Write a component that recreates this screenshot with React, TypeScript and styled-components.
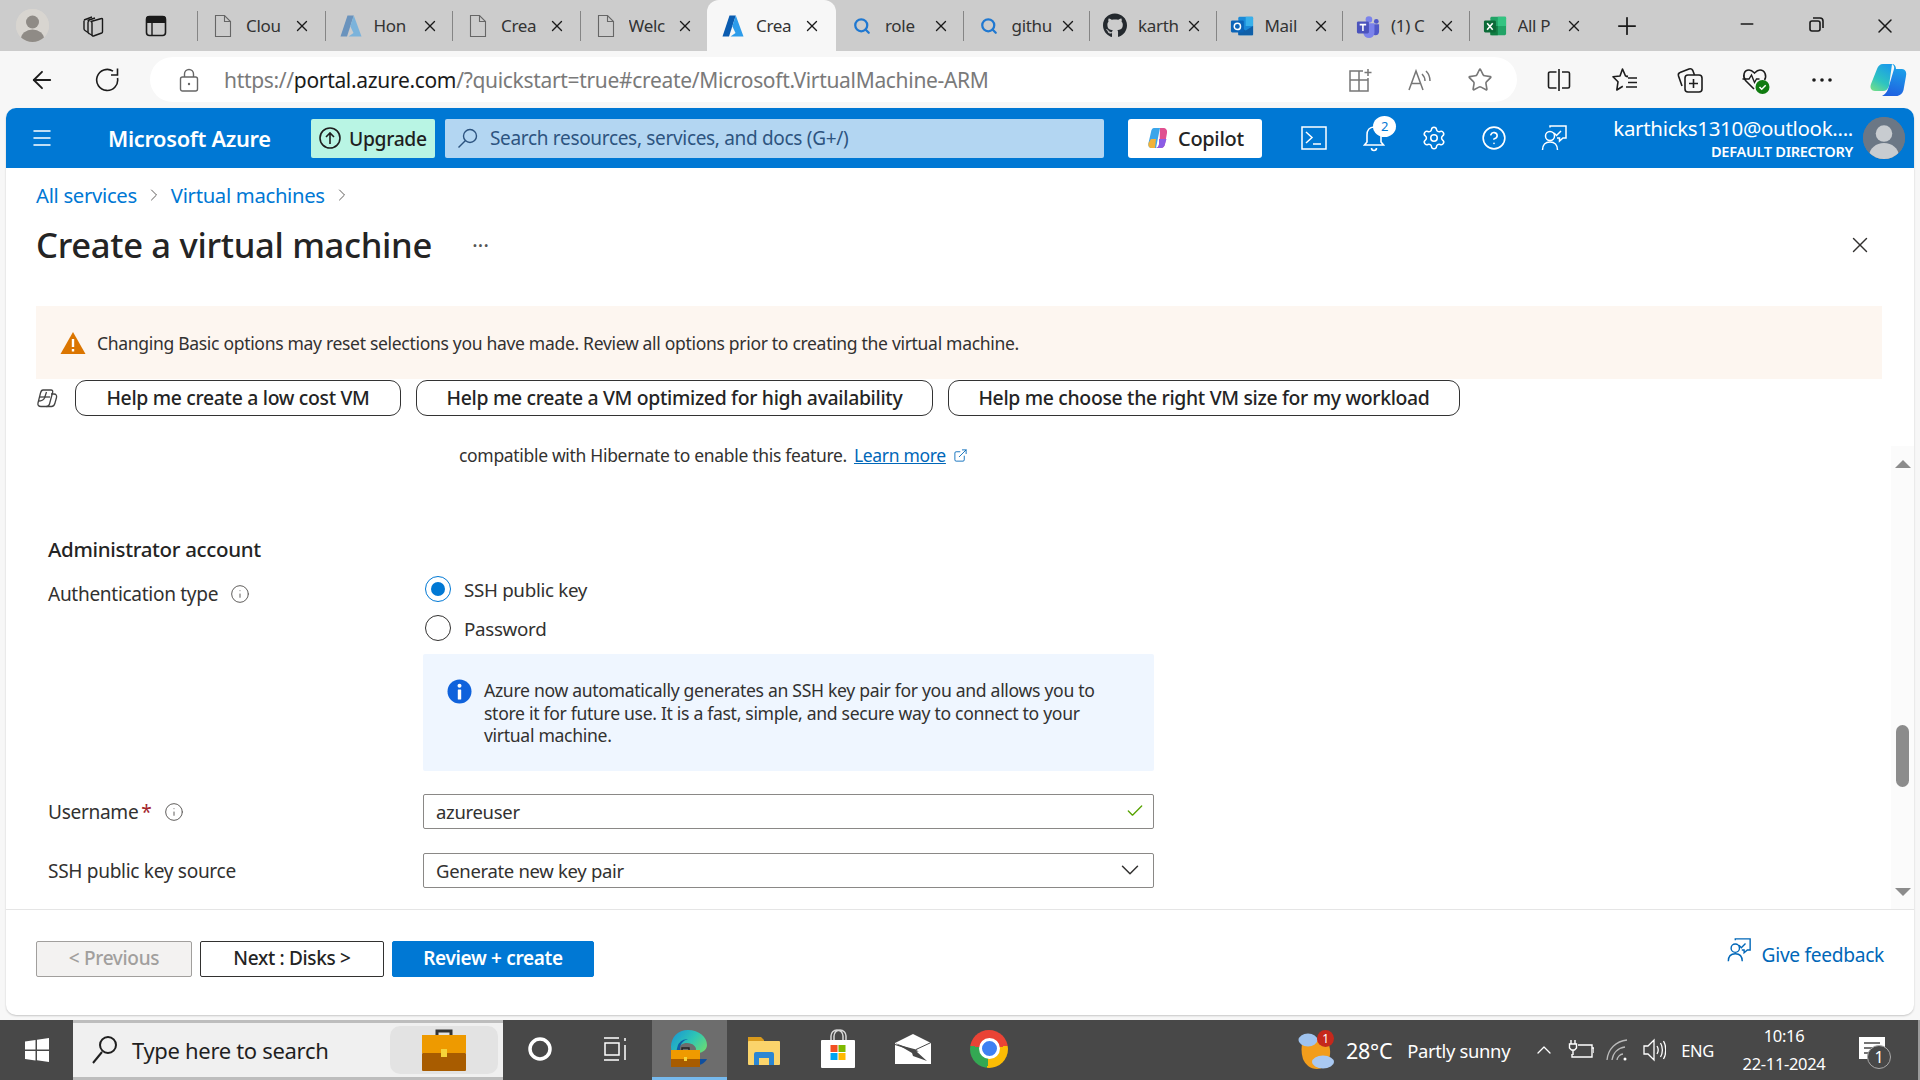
import { ReactElement, ReactNode } from 'react'
import styled, { createGlobalStyle } from 'styled-components'
import { ArrowLeft, Check, ChevronDown, ChevronRight, ChevronUp, CircleHelp, ExternalLink, Info, Menu, Minus, Plus, Search, Settings, Star, X } from 'lucide-react'
import { FaGithub } from 'react-icons/fa'

const FONT = '"Noto Sans", "Open Sans", sans-serif'

const GlobalStyle = createGlobalStyle`
  html, body { margin: 0; padding: 0; background: #f7f7f7; }
  * { box-sizing: border-box; }
  body { font-family: ${FONT}; color: #323130; letter-spacing: -0.02em; }
`

const Page = styled.div`
  width: 1920px;
  height: 1080px;
  overflow: hidden;
  display: flex;
  flex-direction: column;
`

/* browser chrome */
const TabStrip = styled.div`
  height: 51px;
  background: #cccccc;
  display: flex;
  align-items: center;
  flex-shrink: 0;
`
const ProfilePic = styled.div`
  width: 33px;
  height: 33px;
  margin-left: 16px;
  border-radius: 50%;
  background: #d8d5d0;
  overflow: hidden;
  flex-shrink: 0;
  svg { display: block; }
`
const StripIcon = styled.div<{ $ml: number }>`
  width: 24px;
  height: 24px;
  margin-left: ${p => p.$ml}px;
  flex-shrink: 0;
  color: #1a1a1a;
`
const TabList = styled.div`
  display: flex;
  height: 51px;
  margin-left: 29px;
`
const TabItem = styled.div<{ $w: number; $active?: boolean; $sep?: boolean }>`
  position: relative;
  width: ${p => p.$w}px;
  height: 51px;
  display: flex;
  align-items: center;
  padding-left: 14px;
  background: ${p => (p.$active ? '#f7f7f7' : 'transparent')};
  border-radius: ${p => (p.$active ? '12px 12px 0 0' : '0')};
  &::before {
    content: '';
    display: ${p => (p.$sep ? 'block' : 'none')};
    position: absolute;
    left: 0;
    top: 11px;
    height: 30px;
    width: 1px;
    background: #858585;
  }
`
const TabFavicon = styled.div`
  width: 24px;
  height: 24px;
  display: flex;
  align-items: center;
  justify-content: center;
  flex-shrink: 0;
`
const TabTitle = styled.span`
  margin-left: 11px;
  width: 40px;
  font-size: 17px;
  color: #333;
  white-space: nowrap;
  overflow: hidden;
`
const TabClose = styled.div`
  margin-left: 7px;
  display: flex;
  color: #1a1a1a;
`
const NewTab = styled.div`
  width: 64px;
  display: flex;
  align-items: center;
  justify-content: center;
  color: #1a1a1a;
`
const WindowControls = styled.div`
  margin-left: auto;
  display: flex;
  padding-right: 1px;
`
const WindowButton = styled.div`
  width: 69px;
  display: flex;
  justify-content: center;
  color: #1a1a1a;
`
const AddressRow = styled.div`
  height: 57px;
  flex-shrink: 0;
  background: #f7f7f7;
  display: flex;
  align-items: flex-start;
  padding: 6px 0 0 15px;
`
const NavButton = styled.div<{ $ml?: number }>`
  width: 54px;
  height: 45px;
  margin-left: ${p => p.$ml || 0}px;
  flex-shrink: 0;
  display: flex;
  align-items: center;
  justify-content: center;
  color: #1c1c1c;
`
const AddressPill = styled.div`
  width: 1367px;
  height: 45px;
  margin-left: 15px;
  flex-shrink: 0;
  border-radius: 23px;
  background: #fff;
  display: flex;
  align-items: center;
  padding: 0 7px 0 28px;
`
const LockSlot = styled.div`
  width: 22px;
  display: flex;
  justify-content: center;
  color: #555;
`
const UrlText = styled.div`
  flex: 1;
  margin-left: 24px;
  font-size: 21px;
  color: #7a7a7a;
  white-space: nowrap;
`
const UrlHost = styled.span`
  color: #1b1b1b;
`
const PillAction = styled.div`
  width: 60px;
  display: flex;
  justify-content: center;
  color: #777;
`
const ToolbarSlots = styled.div`
  display: flex;
  margin-left: 9px;
  height: 45px;
  flex-shrink: 0;
`
const ToolbarSlot = styled.div`
  width: 65.8px;
  display: flex;
  align-items: center;
  justify-content: center;
  color: #1c1c1c;
`

/* azure portal */
const PortalShell = styled.div`
  height: 907px;
  flex-shrink: 0;
  margin: 0 6px;
  background: #fff;
  border-radius: 10px;
  box-shadow: 0 1px 2px rgba(0, 0, 0, 0.2);
  overflow: hidden;
  display: flex;
  flex-direction: column;
`
const AzureHeader = styled.div`
  height: 60px;
  flex-shrink: 0;
  background: #0078d4;
  display: flex;
  align-items: center;
  color: #fff;
`
const Hamburger = styled.div`
  margin-left: 24px;
  width: 24px;
  display: flex;
`
const BrandName = styled.div`
  margin-left: 54px;
  width: 163px;
  font-size: 21.8px;
  font-weight: 600;
  white-space: nowrap;
`
const UpgradeButton = styled.div`
  margin-left: 40px;
  width: 124px;
  height: 39px;
  border-radius: 2px;
  background: #b9f5e4;
  color: #1f1f1f;
  font-size: 19.3px;
  font-weight: 500;
  display: flex;
  align-items: center;
  gap: 7px;
  padding-left: 7px;
  white-space: nowrap;
`
const SearchBox = styled.div`
  margin-left: 10px;
  width: 659px;
  height: 39px;
  border-radius: 2px;
  background: #b3d6f2;
  color: #2d5480;
  font-size: 19px;
  display: flex;
  align-items: center;
  gap: 12px;
  padding-left: 12px;
  white-space: nowrap;
`
const CopilotButton = styled.div`
  margin-left: 24px;
  width: 134px;
  height: 39px;
  border-radius: 3px;
  background: #fff;
  color: #242424;
  font-size: 20px;
  font-weight: 500;
  display: flex;
  align-items: center;
  gap: 8px;
  padding-left: 18px;
`
const HeaderIcons = styled.div`
  margin-left: 22px;
  display: flex;
`
const HeaderIcon = styled.div`
  position: relative;
  width: 60px;
  height: 40px;
  display: flex;
  align-items: center;
  justify-content: center;
`
const NotifyBadge = styled.span`
  position: absolute;
  top: -2px;
  left: 29px;
  width: 23px;
  height: 21px;
  border-radius: 50%;
  background: #fff;
  color: #0078d4;
  font-size: 13px;
  text-align: center;
  line-height: 21px;
`
const Account = styled.div`
  flex: 1;
  text-align: right;
  white-space: nowrap;
`
const AccountMail = styled.div`
  font-size: 20.5px;
  line-height: 26px;
`
const AccountDir = styled.div`
  font-size: 14.6px;
  font-weight: 600;
  line-height: 20px;
`
const AccountAvatar = styled.div`
  width: 42px;
  height: 42px;
  margin: 0 9px 0 10px;
  border-radius: 50%;
  background: #6b7785;
  overflow: hidden;
  flex-shrink: 0;
  svg { display: block; }
`
const Blade = styled.div`
  flex: 1;
  display: flex;
  flex-direction: column;
  min-height: 0;
`
const Breadcrumb = styled.div`
  height: 24px;
  margin: 15px 0 0 30px;
  display: flex;
  align-items: center;
  gap: 7px;
  font-size: 20.3px;
  color: #0078d4;
  svg { color: #605e5c; }
`
const TitleRow = styled.div`
  height: 36px;
  margin: 19px 0 0 30px;
  display: flex;
  align-items: center;
`
const BladeTitle = styled.h1`
  margin: 0;
  width: 434px;
  font-size: 34.6px;
  font-weight: 500;
  color: #242424;
  white-space: nowrap;
`
const TitleMore = styled.div`
  font-size: 22px;
  color: #555;
  margin-left: 2px;
`
const CloseBlade = styled.div`
  margin-left: auto;
  margin-right: 41px;
  margin-top: 1px;
  display: flex;
  color: #323130;
`
const WarningBar = styled.div`
  height: 73px;
  margin: 44px 32px 0 30px;
  padding-left: 24px;
  background: #fdf6f0;
  display: flex;
  align-items: center;
  gap: 11px;
  font-size: 17.55px;
  color: #323130;
`
const PromptRow = styled.div`
  height: 36px;
  margin: 1px 0 30px 30px;
  display: flex;
  align-items: center;
`
const PromptIcon = styled.div`
  width: 39px;
  color: #444;
  display: flex;
`
const PromptButton = styled.div<{ $w: number; $ml?: number }>`
  width: ${p => p.$w}px;
  margin-left: ${p => p.$ml || 0}px;
  height: 36px;
  padding-bottom: 1px;
  border: 1.5px solid #333;
  border-radius: 11px;
  background: #fff;
  color: #242424;
  font-size: 19.4px;
  font-weight: 500;
  display: flex;
  align-items: center;
  justify-content: center;
  white-space: nowrap;
`
const ScrollArea = styled.div`
  height: 464px;
  flex-shrink: 0;
  border-bottom: 1px solid #e5e5e5;
  display: flex;
`
const FormColumn = styled.div`
  flex: 1;
  padding-left: 42px;
`
const CompatLine = styled.div`
  height: 18px;
  padding-left: 411px;
  display: flex;
  align-items: center;
  gap: 7px;
  font-size: 17.5px;
  white-space: nowrap;
`
const LearnMore = styled.a`
  color: #0067b8;
  text-decoration: underline;
`
const SectionHeading = styled.div`
  height: 24px;
  margin: 73px 0 15px;
  line-height: 24px;
  font-size: 20.5px;
  font-weight: 500;
  color: #242424;
`
const FormRow = styled.div<{ $mb?: number }>`
  display: grid;
  grid-template-columns: 375px 731px;
  margin-bottom: ${p => p.$mb || 0}px;
`
const FieldLabel = styled.div`
  padding-top: 6px;
  height: 30px;
  line-height: 24px;
  font-size: 19.1px;
  display: flex;
  align-items: center;
  gap: 12px;
  color: #323130;
  svg { color: #605e5c; flex-shrink: 0; }
`
const Required = styled.span`
  color: #a4262c;
  margin-left: -9px;
`
const RadioRow = styled.div`
  height: 26px;
  margin-bottom: 13px;
  display: flex;
  align-items: center;
  gap: 13px;
  font-size: 18.8px;
`
const RadioDot = styled.span<{ $checked?: boolean }>`
  width: 26px;
  height: 26px;
  margin-left: 2px;
  border-radius: 50%;
  border: 1.5px solid ${p => (p.$checked ? '#0078d4' : '#323130')};
  display: flex;
  align-items: center;
  justify-content: center;
  &::after {
    content: '';
    display: ${p => (p.$checked ? 'block' : 'none')};
    width: 14px;
    height: 14px;
    border-radius: 50%;
    background: #0078d4;
  }
`
const RadioLabel = styled.span`
  padding-top: 1px;
`
const InfoBox = styled.div`
  height: 117px;
  margin-bottom: 23px;
  padding: 25px 20px 0 24px;
  border-radius: 2px;
  background: #eff6ff;
  display: flex;
  gap: 12px;
`
const InfoText = styled.div`
  font-size: 17.6px;
  line-height: 22.7px;
  max-width: 632px;
  color: #323130;
`
const FieldBox = styled.div`
  height: 35px;
  border: 1px solid #8a8886;
  border-radius: 2px;
  padding: 0 8px 1px 12px;
  display: flex;
  align-items: center;
  justify-content: space-between;
  font-size: 18.5px;
  color: #323130;
`
const ScrollTrack = styled.div`
  width: 23px;
  background: #fbfbfb;
  display: flex;
  flex-direction: column;
  align-items: center;
  padding-top: 14px;
`
const ScrollArrow = styled.div<{ $down?: boolean }>`
  width: 0;
  height: 0;
  border-left: 8px solid transparent;
  border-right: 8px solid transparent;
  border-${p => (p.$down ? 'top' : 'bottom')}: 8px solid #8c8c8c;
`
const ScrollThumb = styled.div`
  width: 13px;
  height: 62px;
  margin: 257px 0 101px;
  border-radius: 7px;
  background: #8c8c8c;
`
const BladeFooter = styled.div`
  flex: 1;
  padding: 31px 30px 0;
  display: flex;
  align-items: flex-start;
  gap: 8px;
`
const FooterButton = styled.div<{ $w: number; $kind: 'disabled' | 'outline' | 'primary' }>`
  width: ${p => p.$w}px;
  height: 36px;
  padding-bottom: 2px;
  border-radius: 2px;
  font-size: 19px;
  font-weight: ${p => (p.$kind === 'primary' ? 600 : 500)};
  display: flex;
  align-items: center;
  justify-content: center;
  white-space: nowrap;
  background: ${p => (p.$kind === 'disabled' ? '#f3f2f1' : p.$kind === 'primary' ? '#0078d4' : '#fff')};
  color: ${p => (p.$kind === 'disabled' ? '#a19f9d' : p.$kind === 'primary' ? '#fff' : '#242424')};
  border: 1px solid ${p => (p.$kind === 'disabled' ? '#a19f9d' : p.$kind === 'primary' ? '#0078d4' : '#323130')};
`
const GiveFeedback = styled.div`
  margin-left: auto;
  display: flex;
  align-items: center;
  gap: 10px;
  margin-top: -2px;
  height: 30px;
  font-size: 19.2px;
  color: #0067b8;
  white-space: nowrap;
  svg { margin-top: -8px; }
`

/* windows taskbar */
const Taskbar = styled.div`
  margin-top: 5px;
  height: 60px;
  flex-shrink: 0;
  background: #484848;
  border-right: 2px solid #9a9a9a;
  display: flex;
  align-items: center;
  color: #fff;
`
const StartButton = styled.div`
  width: 73px;
  height: 60px;
  display: flex;
  align-items: center;
  justify-content: center;
`
const TaskSearch = styled.div`
  width: 430px;
  height: 60px;
  background: #f0f0f0;
  border-top: 3px solid #bdbdbd;
  border-bottom: 3px solid #bdbdbd;
  display: flex;
  align-items: center;
  padding-left: 18px;
  color: #1f1f1f;
  font-size: 22px;
  white-space: nowrap;
`
const TaskSearchText = styled.span`
  margin-left: 13px;
  width: 258px;
`
const TaskChip = styled.div`
  width: 108px;
  height: 48px;
  border-radius: 10px;
  background: #e3e3e3;
  display: flex;
  align-items: center;
  justify-content: center;
`
const TaskSlot = styled.div<{ $active?: boolean }>`
  position: relative;
  width: 74.5px;
  height: 60px;
  display: flex;
  align-items: center;
  justify-content: center;
  background: ${p => (p.$active ? '#6d6d6d' : 'transparent')};
  border-bottom: 3px solid ${p => (p.$active ? '#76b9ed' : 'transparent')};
`
const Tray = styled.div`
  margin-left: auto;
  display: flex;
  align-items: center;
  height: 60px;
  padding-right: 35px;
`
const TrayGlyph = styled.div<{ $ml: number }>`
  margin-left: ${p => p.$ml}px;
  display: flex;
  color: #fff;
`
const WeatherTemp = styled.span`
  margin-left: 11px;
  font-size: 21.5px;
  white-space: nowrap;
`
const WeatherText = styled.span`
  margin-left: 15px;
  font-size: 18.4px;
  white-space: nowrap;
`
const TrayText = styled.span<{ $ml: number }>`
  margin-left: ${p => p.$ml}px;
  font-size: 16.5px;
`
const Clock = styled.div`
  margin-left: 22px;
  width: 96px;
  text-align: center;
  font-size: 16.5px;
  line-height: 28px;
  white-space: nowrap;
`
const ChromeOrb = styled.div`
  width: 38px;
  height: 38px;
  margin-left: 4px;
  border-radius: 50%;
  background: conic-gradient(from -80deg, #ea4335 0 160deg, #fbbc04 160deg 265deg, #34a853 265deg 360deg);
  display: flex;
  align-items: center;
  justify-content: center;
  &::after {
    content: '';
    width: 15px;
    height: 15px;
    border-radius: 50%;
    background: #3f80f2;
    border: 3px solid #fff;
    box-sizing: content-box;
  }
`
const WeatherBadge = styled.span`
  position: absolute;
  top: 0;
  left: 19px;
  width: 17px;
  height: 17px;
  border-radius: 50%;
  background: #c5281c;
  color: #fff;
  font-size: 12px;
  line-height: 17px;
  text-align: center;
`
const WeatherIconBox = styled.div`
  position: relative;
  width: 37px;
  height: 40px;
`
const NoteCount = styled.span`
  position: absolute;
  right: -8px;
  bottom: -6px;
  width: 24px;
  height: 24px;
  border-radius: 50%;
  background: #484848;
  border: 1px solid #aaa;
  font-size: 16px;
  line-height: 22px;
  text-align: center;
`
const NoteBox = styled.div`
  position: relative;
  margin-left: 27px;
  width: 24px;
  height: 26px;
`

const DocIcon = ({ color = '#666' }: { color?: string }): ReactElement => (
  <svg width="20" height="24" viewBox="0 0 20 24" fill="none" stroke={color} strokeWidth="1.1">
    <path d="M2.5 1.5h9l6 6v15h-15z" />
    <path d="M11.5 1.5v6h6" />
  </svg>
)
const AzureA = ({ dim, size = 24 }: { dim?: boolean; size?: number }): ReactElement => (
  <svg width={size} height={size} viewBox="0 0 24 24" opacity={dim ? 0.5 : 1}>
    <path d="M8.5 1.5h6.3L8 22.5H1.5z" fill="#0a5cb0" />
    <path d="M14.8 1.5 22.500 22.500H9.500l5-3.400-3.200-6.800z" fill="#2d9cea" />
  </svg>
)
const SearchFav = (): ReactElement => <Search size={18} color="#1f78d1" strokeWidth={3} />
const OutlookIcon = (): ReactElement => (
  <svg width="26" height="24" viewBox="0 0 26 24">
    <rect x="9" y="2" width="16" height="20" rx="1.5" fill="#1a8ad8" />
    <rect x="17" y="2" width="8" height="10" fill="#38b0ea" />
    <path d="M9 12l8 5 8-5v10H9z" fill="#0f5fa8" />
    <rect x="1" y="6" width="14" height="13" rx="1.5" fill="#0b64b8" />
    <circle cx="8" cy="12.500" r="3.400" fill="none" stroke="#fff" strokeWidth="1.600" />
  </svg>
)
const TeamsIcon = (): ReactElement => (
  <svg width="26" height="24" viewBox="0 0 26 24">
    <circle cx="14" cy="5" r="3.600" fill="#7b83eb" />
    <circle cx="22" cy="7" r="2.600" fill="#5059c9" />
    <path d="M17 10h8v8a4 4 0 0 1-8 0z" fill="#5059c9" />
    <path d="M8 9h12v10a6 6 0 0 1-12 0z" fill="#7b83eb" />
    <rect x="1" y="7" width="13" height="13" rx="1.500" fill="#4b53bc" />
    <path d="M4 10.500h7M7.500 10.500v7" stroke="#fff" strokeWidth="1.700" />
  </svg>
)
const ExcelIcon = (): ReactElement => (
  <svg width="26" height="24" viewBox="0 0 26 24">
    <rect x="8" y="2" width="17" height="20" rx="1.500" fill="#21a366" />
    <rect x="16" y="2" width="9" height="10" fill="#33c481" />
    <rect x="8" y="12" width="8" height="10" fill="#107c41" />
    <rect x="1" y="6" width="13" height="13" rx="1.500" fill="#0b6a37" />
    <path d="M4.500 9l6 7M10.500 9l-6 7" stroke="#fff" strokeWidth="1.700" />
  </svg>
)
const CopilotMark = (): ReactElement => (
  <svg width="38" height="34" viewBox="0 0 38 34">
    <defs>
      <linearGradient id="cpA" x1="0.7" y1="0" x2="0.2" y2="1">
        <stop offset="0" stopColor="#1b9de8" />
        <stop offset="0.6" stopColor="#2ec4c0" />
        <stop offset="1" stopColor="#6fdc8c" />
      </linearGradient>
      <linearGradient id="cpB" x1="0.5" y1="0" x2="0.3" y2="1">
        <stop offset="0" stopColor="#1ca6ea" />
        <stop offset="1" stopColor="#1f5fe0" />
      </linearGradient>
    </defs>
    <path d="M23 1h-9c-3 0-5 2-6 5L2 21c-1.500 4 .5 7 4 7h8c3 0 5-2 6-5z" fill="url(#cpA)" />
    <path d="M23 1c2 1 2.500 3 2 5l-5 17c-.8 3-2.500 8-7 10h14c4 0 6.500-2.500 7.500-6L37 13c1-4-1-7-4-7h-6c0-3-1.500-5-4-5z" fill="url(#cpB)" />
  </svg>
)
const CopilotColor = (): ReactElement => (
  <svg width="24" height="24" viewBox="0 0 24 24">
    <path d="M8 2h6l-4 20H6c-3 0-4-2-3.500-5L5 6c.4-2.500 1.500-4 3-4z" fill="#3aa5ea" />
    <path d="M5 13h5l-1 9H6c-3 0-4-2-3.500-5z" fill="#f2b138" />
    <path d="M14 2h3c3 0 4.500 2 4 5l-2 11c-.5 2.500-2 4-4 4h-5c2-.5 3-2.500 3.500-4z" fill="#e0508f" />
    <path d="M13 13h7.500L19 18c-.5 2.500-2 4-4 4h-5c2-.5 2.500-2.500 3-4z" fill="#8a5ce6" />
  </svg>
)
const BriefcaseIcon = ({ size = 46 }: { size?: number }): ReactElement => (
  <svg width={size} height={size} viewBox="0 0 46 46">
    <path d="M16 8V4h14v4" fill="none" stroke="#333" strokeWidth="3" />
    <rect x="1" y="8" width="44" height="18" fill="#ee9a00" />
    <rect x="1" y="26" width="44" height="18" rx="1" fill="#a85c00" />
    <rect x="20" y="22" width="6" height="8" fill="#f5d33a" />
  </svg>
)
const FeedbackIcon = ({ color = '#fff', size = 28 }: { color?: string; size?: number }): ReactElement => (
  <svg width={size} height={size} viewBox="0 0 28 28" fill="none" stroke={color} strokeWidth="1.500">
    <circle cx="10" cy="12" r="4.500" />
    <path d="M2.500 26c0-5 3-8 7.500-8s7.500 3 7.500 8" />
    <path d="M10 3.500V2h16v12h-3l-3.500 3v-3H17" />
    <path d="m14 9 2.500 2.500L21 7" />
  </svg>
)
const BellIcon = (): ReactElement => (
  <svg width="24" height="28" viewBox="0 0 24 28" fill="none" stroke="#fff" strokeWidth="1.600">
    <path d="M12 3c-4.500 0-7 3.500-7 8v7l-2.500 3h19L19 18v-7c0-4.500-2.500-8-7-8z" />
    <path d="M9.500 24a2.500 2.500 0 0 0 5 0" />
  </svg>
)
const TerminalIcon = (): ReactElement => (
  <svg width="26" height="24" viewBox="0 0 26 24" fill="none" stroke="#fff" strokeWidth="1.500">
    <rect x="1" y="1" width="24" height="22" />
    <path d="m5 6 6 5.500-6 5.500M12 18h8" />
  </svg>
)
const Workspaces = (): ReactElement => (
  <svg width="24" height="24" viewBox="0 0 24 24" fill="none" stroke="#1a1a1a" strokeWidth="1.400" strokeLinejoin="round">
    <path d="M11 7.500 21.500 4.500c.6-.2 1 .2 1 .8v12.500c0 .6-.3 1-.8 1.200l-8.200 3c-.8.300-1.500-.2-1.500-1V9c0-.6-.1-1.300-1-1.500z" />
    <path d="M7.500 6.500 15 4M12.500 21.500 9 19.500c-.6-.3-1-.8-1-1.500V8.500c0-.8.500-1.500 1.500-1.800" />
    <path d="M4 6 12 3M8 18.500l-3-2c-.6-.4-1-1-1-1.800V6.500" />
  </svg>
)
const VerticalTabs = (): ReactElement => (
  <svg width="24" height="24" viewBox="0 0 24 24">
    <rect x="2.500" y="2.500" width="19" height="19" rx="3" fill="none" stroke="#1a1a1a" strokeWidth="1.600" />
    <path d="M5 2h14a3 3 0 0 1 3 3v4H2V5a3 3 0 0 1 3-3z" fill="#1a1a1a" />
    <path d="M8 9v12" stroke="#1a1a1a" strokeWidth="1.400" />
  </svg>
)
const PersonFill = ({ bg, fg, size }: { bg: string; fg: string; size: number }): ReactElement => (
  <svg width={size} height={size} viewBox="0 0 33 33">
    <rect width="33" height="33" fill={bg} />
    <circle cx="16.500" cy="13" r="6.500" fill={fg} />
    <ellipse cx="16.500" cy="30" rx="11.500" ry="9.500" fill={fg} />
  </svg>
)
const ReloadIcon = (): ReactElement => (
  <svg width="26" height="26" viewBox="0 0 26 26" fill="none" stroke="#1c1c1c" strokeWidth="1.600">
    <path d="M22.500 11A10.500 10.500 0 1 1 18 4.200" />
    <path d="M22.500 1.500V8H16" />
  </svg>
)
const PadLock = (): ReactElement => (
  <svg width="20" height="24" viewBox="0 0 20 24" fill="none" stroke="#666" strokeWidth="1.400">
    <rect x="1.500" y="9" width="17" height="14" rx="2" />
    <path d="M5.500 9V6a4.500 4.500 0 0 1 9 0v3" />
    <circle cx="10" cy="16" r="1.200" fill="#666" stroke="none" />
  </svg>
)
const ReadAloud = (): ReactElement => (
  <svg width="28" height="26" viewBox="0 0 28 26" fill="none" stroke="#777" strokeWidth="1.500">
    <path d="M3 23 10 4l7 19M5.500 16.500h9" />
    <path d="M16 7c2 2 3 4 3 7M20 4c2.500 2.500 4 6 4 10" />
  </svg>
)
const AppsPlus = (): ReactElement => (
  <svg width="26" height="26" viewBox="0 0 26 26" fill="none" stroke="#777" strokeWidth="1.500">
    <path d="M16 4H3v20h18V11M3 13h18M12 4v20M21 2v7M17.500 5.500h7" />
  </svg>
)
const SplitScreen = (): ReactElement => (
  <svg width="24" height="24" viewBox="0 0 24 24" fill="none" stroke="#1c1c1c" strokeWidth="1.600" strokeLinejoin="round">
    <path d="M9.500 4H3a1.500 1.500 0 0 0-1.500 1.500v13A1.500 1.500 0 0 0 3 20h6.500M15 4h6a1.500 1.500 0 0 1 1.500 1.500v13A1.500 1.500 0 0 1 21 20h-6M12 1v22" />
  </svg>
)
const Favorites = (): ReactElement => (
  <svg width="26" height="26" viewBox="0 0 26 26" fill="none" stroke="#1c1c1c" strokeWidth="1.600" strokeLinejoin="round">
    <path d="M16 9.500 13.500 9 10.500 2 8 9l-7 .8 5 5L4.800 23l6-3.800" />
    <path d="M14 9.500h2M16 11h9M16 15.500h9M14 20h11" />
  </svg>
)
const Collections = (): ReactElement => (
  <svg width="28" height="28" viewBox="0 0 28 28" fill="none" stroke="#1c1c1c" strokeWidth="1.600" strokeLinejoin="round">
    <rect x="9" y="9" width="17" height="17" rx="3" />
    <path d="M17.500 13v9M13 17.500h9M6 20 2.500 10c-.5-2 0-3 1.500-3.500L13 3c2-.7 3 0 3.800 1.500L18.500 9" />
  </svg>
)
const HealthHeart = (): ReactElement => (
  <svg width="30" height="30" viewBox="0 0 30 30" fill="none">
    <path d="M13 24 5 16C1 11 3 5 8 5c2.500 0 4 1.500 5.500 3C15 6.500 16.500 5 19 5c5 0 7 6 4.500 10" stroke="#1c1c1c" strokeWidth="1.600" />
    <path d="M1.500 14H8l2.500-4 3 7.500 2-3.500h3" stroke="#1c1c1c" strokeWidth="1.400" />
    <circle cx="21.500" cy="22" r="7" fill="#107c10" />
    <path d="m18.500 22 2.200 2.200 4-4" stroke="#fff" strokeWidth="1.500" />
  </svg>
)
const PromptGlyph = (): ReactElement => (
  <svg width="22" height="20" viewBox="0 0 22 20" fill="none" stroke="#444" strokeWidth="1.300" strokeLinejoin="round">
    <path d="M7 2h8c1.500 0 2 1 1.600 2.500L13.500 16c-.4 1.500-1.300 2.500-3 2.500H5C2.500 18.500 1.500 17 2 15L4.500 5C5 3 5.800 2 7 2z" />
    <path d="M15 6h3c2 0 3 1.500 2.500 3.500L19 15c-.5 2-1.500 3.500-3.500 3.500h-5" />
    <path d="M3.500 9H14" />
    <path d="M2.500 13c3 0 5-1 6-3l2-6" />
  </svg>
)
const WindowsLogo = (): ReactElement => (
  <svg width="26" height="26" viewBox="0 0 26 26" fill="#fff">
    <path d="M1 4.500 11.500 3v9.500H1zM13 2.800 25 1v11.500H13zM1 14h10.500v9.500L1 22zM13 14h12v11l-12-1.800z" />
  </svg>
)
const TaskMagnifier = (): ReactElement => (
  <svg width="28" height="30" viewBox="0 0 28 30" fill="none" stroke="#1f1f1f" strokeWidth="2">
    <circle cx="17" cy="10" r="8" />
    <path d="M11 17 2 28" />
  </svg>
)
const TaskViewIcon = (): ReactElement => (
  <svg width="26" height="26" viewBox="0 0 26 26" fill="none" stroke="#fff" strokeWidth="1.500">
    <path d="M2 2h15M2 24h15M3 7h14v12H3zM23 2v3M23 9v15" />
  </svg>
)
const EdgeIcon = (): ReactElement => (
  <svg width="38" height="40" viewBox="0 0 38 40">
    <defs>
      <linearGradient id="edgeTop" x1="0" y1="0" x2="1" y2="0.7">
        <stop offset="0" stopColor="#1692d8" />
        <stop offset="0.55" stopColor="#2fc6b4" />
        <stop offset="1" stopColor="#6fdc6f" />
      </linearGradient>
    </defs>
    <path d="M18 1C8 1 1 8 1 18c0 5 1.500 9 4 12h6c-3-3-4-7-3-10 1-3.500 4.500-6 9-6 6 0 9 4 9 6 0 2-1 3-1 4 3 1 12-1 12-8C37 8 29 1 18 1z" fill="url(#edgeTop)" />
    <path d="M8 16c2-4 6-6 10-6-6 2-8 6-8 10 0 5 2 8 4 10H8c-2-4-2-9 0-14z" fill="#0d5ea8" />
    <path d="M22 30h15c-2 4-7 7-13 7-4 0-7-1-9-3h4c2 0 2-2 3-4z" fill="#0f4f9e" />
    <path d="M12 21v-2h7v2" fill="none" stroke="#222" strokeWidth="1.400" />
    <rect x="1" y="21" width="29" height="9" fill="#ef9a00" />
    <rect x="1" y="30" width="29" height="8" fill="#a85c00" />
    <rect x="14" y="28" width="3" height="4" fill="#f5d33a" />
  </svg>
)
const FolderIcon = (): ReactElement => (
  <svg width="34" height="34" viewBox="0 0 34 34">
    <path d="M1 5h13l3 3v4H1z" fill="#d99a1c" />
    <rect x="1" y="9" width="32" height="24" rx="1" fill="#fbd46b" />
    <path d="M7 33V22a2 2 0 0 1 2-2h16a2 2 0 0 1 2 2v11h-5v-7H12v7z" fill="#2b86d3" />
  </svg>
)
const StoreIcon = (): ReactElement => (
  <svg width="36" height="40" viewBox="0 0 36 40">
    <path d="M11 12V7a6 6 0 0 1 12 0v5M14 12V7a6 6 0 0 1 12 0v5" fill="none" stroke="#d6d6d6" strokeWidth="1.500" />
    <rect x="1" y="11" width="34" height="28" rx="1" fill="#fff" />
    <rect x="10.500" y="16" width="7" height="7" fill="#f25022" />
    <rect x="18.500" y="16" width="7" height="7" fill="#7fba00" />
    <rect x="10.500" y="24" width="7" height="7" fill="#00a4ef" />
    <rect x="18.500" y="24" width="7" height="7" fill="#ffb900" />
  </svg>
)
const MailIcon = (): ReactElement => (
  <svg width="36" height="30" viewBox="0 0 36 30">
    <path d="M18 0 36 9v21H0V9z" fill="#fff" />
    <path d="M0 9 24 18l-2 0 10 9-14-5-1-3z" fill="#484848" />
    <path d="M0 10 23 16 20 17.500 0 11z" fill="#484848" />
    <path d="M36 8.500 21 15.500" stroke="#484848" strokeWidth="1" />
  </svg>
)
const WeatherIcon = (): ReactElement => (
  <svg width="37" height="40" viewBox="0 0 37 40">
    <path d="M5 10h24c4 8 4 15 1 22-2 4-6 7-11 7-7 0-12-5-14-10-2-6-2-13 0-19z" fill="#f29d1c" />
    <ellipse cx="10" cy="10" rx="9.500" ry="6.500" fill="#9fc3ef" />
    <ellipse cx="25" cy="32" rx="11" ry="6.500" fill="#a9c9f2" />
  </svg>
)
const BatteryIcon = (): ReactElement => (
  <svg width="26" height="24" viewBox="0 0 26 24" fill="none" stroke="#fff" strokeWidth="1.400">
    <path d="M10 7h14v12H4v-3M24 10h2v5" />
    <path d="M3 2v4M7 2v4M1.500 6h7v4l-2 2h-3l-2-2zM5 12v5" />
  </svg>
)
const WifiIcon = (): ReactElement => (
  <svg width="24" height="22" viewBox="0 0 24 22" fill="none" stroke="#bbb" strokeWidth="1.300">
    <path d="M1 21C2 10 10 2 21 1M6 21c1-7 6-12 13-13M11 21c.5-3 3-6 6-6" />
    <circle cx="19" cy="20" r="1.500" fill="#fff" stroke="none" />
  </svg>
)
const VolumeIcon = (): ReactElement => (
  <svg width="24" height="24" viewBox="0 0 24 24" fill="none" stroke="#fff" strokeWidth="1.300">
    <path d="M2 8h4l6-6v20l-6-6H2zM15 8c1.500 2.500 1.500 5.500 0 8M18.500 5c2.500 4 2.500 10 0 14M21.500 3c3 5 3 13 0 18" />
  </svg>
)
const NoteIcon = (): ReactElement => (
  <svg width="26" height="26" viewBox="0 0 26 26">
    <path d="M0 0h26v22H14l-4 4v-4H0z" fill="#fff" />
    <path d="M5 6h16M5 11h16M5 16h16" stroke="#484848" strokeWidth="1.300" />
  </svg>
)
const InfoSolid = (): ReactElement => (
  <svg width="25" height="25" viewBox="0 0 25 25" style={{ flexShrink: 0 }}>
    <circle cx="12.500" cy="12.500" r="12" fill="#0f62dc" />
    <circle cx="12.500" cy="6.800" r="2" fill="#fff" />
    <rect x="10.800" y="10.500" width="3.400" height="10" rx="0.500" fill="#fff" />
  </svg>
)

const tabs: { title: string; icon: ReactNode; width: number; active?: boolean; noSep?: boolean }[] = [
  { title: 'Clou', icon: <DocIcon />, width: 127.5 },
  { title: 'Hon', icon: <AzureA dim />, width: 127.5 },
  { title: 'Crea', icon: <DocIcon />, width: 127.5 },
  { title: 'Welc', icon: <DocIcon />, width: 127.5 },
  { title: 'Crea', icon: <AzureA />, width: 129, active: true },
  { title: 'role', icon: <SearchFav />, width: 126.5, noSep: true },
  { title: 'githu', icon: <SearchFav />, width: 126.5 },
  { title: 'karth', icon: <FaGithub size={25} color="#24292e" />, width: 126.5 },
  { title: 'Mail', icon: <OutlookIcon />, width: 126.5 },
  { title: '(1) C', icon: <TeamsIcon />, width: 126.5 },
  { title: 'All P', icon: <ExcelIcon />, width: 126.5 },
]

const TabsBar = (): ReactElement => (
  <TabStrip>
    <ProfilePic><PersonFill bg="#d8d5d0" fg="#8f8b86" size={33} /></ProfilePic>
    <StripIcon $ml={31}><Workspaces /></StripIcon>
    <StripIcon $ml={40}><VerticalTabs /></StripIcon>
    <TabList>
      {tabs.map((tab, i) => (
        <TabItem key={i} $w={tab.width} $active={tab.active} $sep={!tab.active && !tab.noSep}>
          <TabFavicon>{tab.icon}</TabFavicon>
          <TabTitle>{tab.title}</TabTitle>
          <TabClose><X size={18} strokeWidth={1.8} /></TabClose>
        </TabItem>
      ))}
      <NewTab><Plus size={28} strokeWidth={1.5} /></NewTab>
    </TabList>
    <WindowControls>
      <WindowButton><Minus size={20} strokeWidth={1.6} /></WindowButton>
      <WindowButton>
        <svg width="20" height="20" viewBox="0 0 20 20" fill="none" stroke="#1a1a1a" strokeWidth="1.600">
          <rect x="4" y="7" width="10" height="10" rx="2" />
          <path d="M7 4h7a3 3 0 0 1 3 3v7" />
        </svg>
      </WindowButton>
      <WindowButton><X size={24} strokeWidth={1.5} /></WindowButton>
    </WindowControls>
  </TabStrip>
)

const AddressBar = (): ReactElement => (
  <AddressRow>
    <NavButton><ArrowLeft size={28} strokeWidth={1.6} /></NavButton>
    <NavButton $ml={12}><ReloadIcon /></NavButton>
    <AddressPill>
      <LockSlot><PadLock /></LockSlot>
      <UrlText>https://<UrlHost>portal.azure.com</UrlHost>/?quickstart=true#create/Microsoft.VirtualMachine-ARM</UrlText>
      <PillAction><AppsPlus /></PillAction>
      <PillAction><ReadAloud /></PillAction>
      <PillAction><Star size={26} strokeWidth={1.5} /></PillAction>
    </AddressPill>
    <ToolbarSlots>
      <ToolbarSlot><SplitScreen /></ToolbarSlot>
      <ToolbarSlot><Favorites /></ToolbarSlot>
      <ToolbarSlot><Collections /></ToolbarSlot>
      <ToolbarSlot><HealthHeart /></ToolbarSlot>
      <ToolbarSlot>
        <svg width="22" height="6" viewBox="0 0 22 6" fill="#1c1c1c">
          <circle cx="3" cy="3" r="1.800" />
          <circle cx="11" cy="3" r="1.800" />
          <circle cx="19" cy="3" r="1.800" />
        </svg>
      </ToolbarSlot>
      <ToolbarSlot><CopilotMark /></ToolbarSlot>
    </ToolbarSlots>
  </AddressRow>
)

const PortalHeader = (): ReactElement => (
  <AzureHeader>
    <Hamburger><Menu size={24} strokeWidth={1.5} /></Hamburger>
    <BrandName>Microsoft Azure</BrandName>
    <UpgradeButton>
      <svg width="24" height="24" viewBox="0 0 24 24" fill="none" stroke="#1f1f1f" strokeWidth="1.600">
        <circle cx="12" cy="12" r="10" />
        <path d="M12 18V7M8 11l4-4 4 4" />
      </svg>
      Upgrade
    </UpgradeButton>
    <SearchBox>
      <svg width="21" height="21" viewBox="0 0 21 21" fill="none" stroke="#2d5480" strokeWidth="1.400">
        <circle cx="13" cy="8" r="6.500" />
        <path d="M8.500 12.500 1.500 19.500" />
      </svg>
      Search resources, services, and docs (G+/)
    </SearchBox>
    <CopilotButton><CopilotColor />Copilot</CopilotButton>
    <HeaderIcons>
      <HeaderIcon><TerminalIcon /></HeaderIcon>
      <HeaderIcon><BellIcon /><NotifyBadge>2</NotifyBadge></HeaderIcon>
      <HeaderIcon><Settings size={26} strokeWidth={1.4} /></HeaderIcon>
      <HeaderIcon><CircleHelp size={26} strokeWidth={1.5} /></HeaderIcon>
      <HeaderIcon><FeedbackIcon /></HeaderIcon>
    </HeaderIcons>
    <Account>
      <AccountMail>karthicks1310@outlook....</AccountMail>
      <AccountDir>DEFAULT DIRECTORY</AccountDir>
    </Account>
    <AccountAvatar><PersonFill bg="#6b7785" fg="#c8ccd0" size={42} /></AccountAvatar>
  </AzureHeader>
)

const AdminForm = (): ReactElement => (
  <ScrollArea>
    <FormColumn>
      <CompatLine>
        compatible with Hibernate to enable this feature.
        <LearnMore>Learn more</LearnMore>
        <ExternalLink size={15} color="#0067b8" strokeWidth={1.4} />
      </CompatLine>
      <SectionHeading>Administrator account</SectionHeading>
      <FormRow>
        <FieldLabel>Authentication type <Info size={20} strokeWidth={1.2} /></FieldLabel>
        <div>
          <RadioRow><RadioDot $checked /><RadioLabel>SSH public key</RadioLabel></RadioRow>
          <RadioRow><RadioDot /><RadioLabel>Password</RadioLabel></RadioRow>
          <InfoBox>
            <InfoSolid />
            <InfoText>
              Azure now automatically generates an SSH key pair for you and allows you to store it for future use. It is a fast, simple, and secure way to connect to your virtual machine.
            </InfoText>
          </InfoBox>
        </div>
      </FormRow>
      <FormRow $mb={24}>
        <FieldLabel>Username <Required>*</Required> <Info size={20} strokeWidth={1.2} /></FieldLabel>
        <FieldBox>azureuser<Check size={20} color="#57a300" strokeWidth={1.6} /></FieldBox>
      </FormRow>
      <FormRow>
        <FieldLabel>SSH public key source</FieldLabel>
        <FieldBox>Generate new key pair<ChevronDown size={30} color="#323130" strokeWidth={1.2} /></FieldBox>
      </FormRow>
    </FormColumn>
    <ScrollTrack>
      <ScrollArrow />
      <ScrollThumb />
      <ScrollArrow $down />
    </ScrollTrack>
  </ScrollArea>
)

const TaskbarRow = (): ReactElement => (
  <Taskbar>
    <StartButton><WindowsLogo /></StartButton>
    <TaskSearch>
      <TaskMagnifier />
      <TaskSearchText>Type here to search</TaskSearchText>
      <TaskChip><BriefcaseIcon /></TaskChip>
    </TaskSearch>
    <TaskSlot>
      <svg width="26" height="26" viewBox="0 0 26 26" fill="none" stroke="#fff" strokeWidth="3.500"><circle cx="13" cy="13" r="10" /></svg>
    </TaskSlot>
    <TaskSlot><TaskViewIcon /></TaskSlot>
    <TaskSlot $active><EdgeIcon /></TaskSlot>
    <TaskSlot><FolderIcon /></TaskSlot>
    <TaskSlot><StoreIcon /></TaskSlot>
    <TaskSlot><MailIcon /></TaskSlot>
    <TaskSlot><ChromeOrb /></TaskSlot>
    <Tray>
      <WeatherIconBox><WeatherIcon /><WeatherBadge>1</WeatherBadge></WeatherIconBox>
      <WeatherTemp>28°C</WeatherTemp>
      <WeatherText>Partly sunny</WeatherText>
      <TrayGlyph $ml={22}><ChevronUp size={24} strokeWidth={1.3} /></TrayGlyph>
      <TrayGlyph $ml={12}><BatteryIcon /></TrayGlyph>
      <TrayGlyph $ml={12}><WifiIcon /></TrayGlyph>
      <TrayGlyph $ml={12}><VolumeIcon /></TrayGlyph>
      <TrayText $ml={15}>ENG</TrayText>
      <Clock>10:16<br />22-11-2024</Clock>
      <NoteBox><NoteIcon /><NoteCount>1</NoteCount></NoteBox>
    </Tray>
  </Taskbar>
)

const App = (): ReactElement => (
  <Page>
    <GlobalStyle />
    <TabsBar />
    <AddressBar />
    <PortalShell>
      <PortalHeader />
      <Blade>
        <Breadcrumb>
          All services <ChevronRight size={20} strokeWidth={1.2} /> Virtual machines <ChevronRight size={20} strokeWidth={1.2} />
        </Breadcrumb>
        <TitleRow>
          <BladeTitle>Create a virtual machine</BladeTitle>
          <TitleMore>···</TitleMore>
          <CloseBlade><X size={26} strokeWidth={1.3} /></CloseBlade>
        </TitleRow>
        <WarningBar>
          <svg width="26" height="24" viewBox="0 0 26 24">
            <path d="M13 1 25.500 23H.5z" fill="#db7500" />
            <path d="M13 8v8M13 18v2.500" stroke="#fff" strokeWidth="2.400" />
          </svg>
          Changing Basic options may reset selections you have made. Review all options prior to creating the virtual machine.
        </WarningBar>
        <PromptRow>
          <PromptIcon><PromptGlyph /></PromptIcon>
          <PromptButton $w={326}>Help me create a low cost VM</PromptButton>
          <PromptButton $w={517} $ml={15}>Help me create a VM optimized for high availability</PromptButton>
          <PromptButton $w={512} $ml={15}>Help me choose the right VM size for my workload</PromptButton>
        </PromptRow>
        <AdminForm />
        <BladeFooter>
          <FooterButton $w={156} $kind="disabled">&lt; Previous</FooterButton>
          <FooterButton $w={184} $kind="outline">Next : Disks &gt;</FooterButton>
          <FooterButton $w={202} $kind="primary">Review + create</FooterButton>
          <GiveFeedback><FeedbackIcon color="#0067b8" size={26} />Give feedback</GiveFeedback>
        </BladeFooter>
      </Blade>
    </PortalShell>
    <TaskbarRow />
  </Page>
)

export default App
